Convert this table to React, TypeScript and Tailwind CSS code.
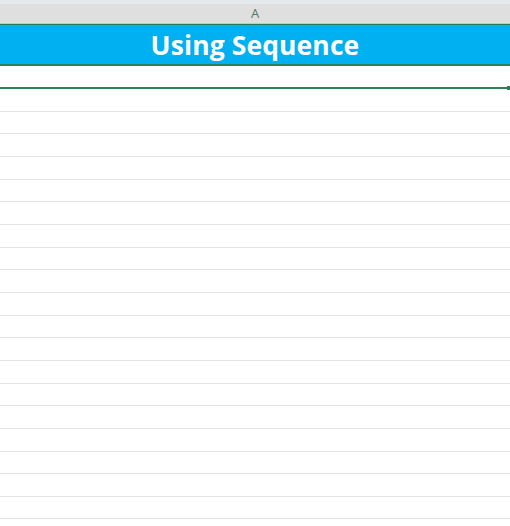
const ROWS = 19;

export default function App() {
  return (
    <div className="w-[510px] h-[526px] overflow-hidden bg-white" style={{ fontFamily: '"Open Sans", "Liberation Sans", sans-serif' }}>
      <div className="h-[4px] bg-[#e6e9ec]" />
      {/* en-tête de colonne */}
      <div className="h-[19px] bg-[#dfdfdf] flex items-center justify-center text-[13px] leading-none text-[#4d7a62]">
        A
      </div>
      <div className="h-[1px] bg-[#a9d8bd]" />
      <div className="h-[1px] bg-[#1f7a5a]" />
      {/* titre */}
      <div className="h-[39px] bg-[#00b0f0] flex items-center justify-center">
        <span className="text-white font-bold text-[26.5px] leading-none tracking-[0.1px] pt-[2px]">Using Sequence</span>
      </div>
      <div className="h-[2px] bg-[#2e7d5b]" />
      {/* cellule sélectionnée */}
      <div className="relative h-[23px] border-b-[2px] border-[#2f7d5a]">
        <div className="absolute right-0 bottom-[-3px] w-[3px] h-[4px] bg-[#2f7d5a]" />
      </div>
      {Array.from({ length: ROWS }).map((_, i) => (
        <div key={i} className="h-[22.67px] border-b border-[#e3e3e3]" />
      ))}
    </div>
  );
}
